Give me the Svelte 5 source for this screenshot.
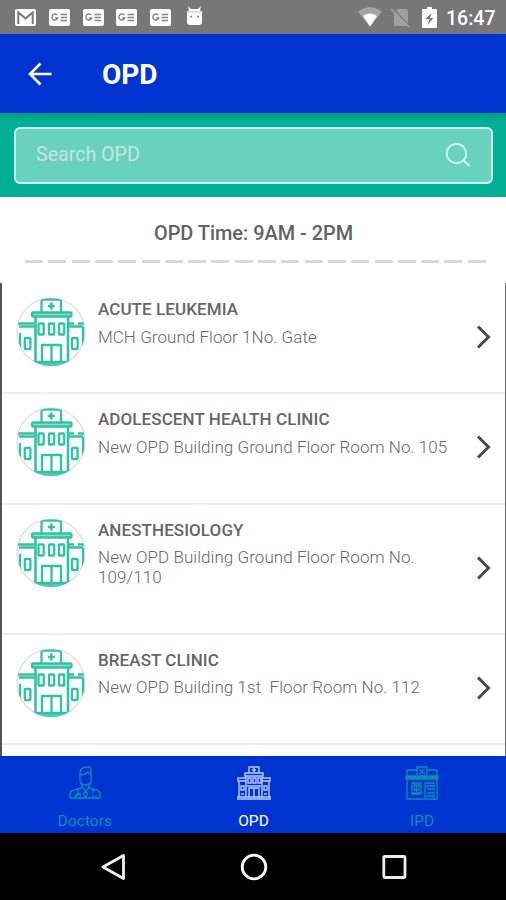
<script>
  const clinics = [
    { name: 'ACUTE LEUKEMIA', place: 'MCH Ground Floor 1No. Gate' },
    { name: 'ADOLESCENT HEALTH CLINIC', place: 'New OPD Building Ground Floor Room No. 105' },
    { name: 'ANESTHESIOLOGY', place: 'New OPD Building Ground Floor Room No. 109/110', tall: true },
    { name: 'BREAST CLINIC', place: 'New OPD Building 1st  Floor Room No. 112' },
    { name: '', place: '' }
  ];
</script>

{#snippet news()}
  <svg class="news" width="21" height="17" viewBox="0 0 21 17">
    <rect x="0" y="0" width="21" height="17" rx="2" fill="#fff" />
    <path d="M8.3 6.2A3 3 0 1 0 8.7 9H6.2M11.5 5.5h6.5M11.5 8.5h6.5M11.5 11.5h6.5" fill="none" stroke="#858585" stroke-width="1.4" />
  </svg>
{/snippet}

{#snippet hospital()}
  <svg class="building" width="70" height="70" viewBox="0 0 70 70">
    <defs><clipPath id="disc"><circle cx="35" cy="35" r="34" /></clipPath></defs>
    <circle cx="35" cy="35" r="34" fill="#fff" stroke="#dcdcdc" stroke-width="1.2" />
    <g clip-path="url(#disc)" fill="none" stroke="#30c2a7" stroke-width="2.3" stroke-linejoin="round">
      <path d="M25.500 15V4.500q0-2 2-2h15.500q2 0 2 2V15" />
      <path d="M35.300 5.500v7M31.800 9h7" stroke-width="2.600" />
      <rect x="16" y="15.500" width="39.500" height="4" rx="1" fill="#8bdccd" />
      <path d="M19.500 20v46M52 20v46" stroke-width="2.600" />
      <path d="M0 26.500h18.500M3 29.500h15.500M53 26.500h5M62 26.500h8M53 29.500h14M4 36v28M67 30v34" />
      <rect x="22.500" y="26.500" width="5.200" height="11" rx=".7" />
      <rect x="33" y="26.500" width="5.200" height="11" rx=".7" />
      <rect x="43" y="26.500" width="5.200" height="11" rx=".7" />
      <rect x="8.800" y="41" width="5.600" height="11" rx=".7" />
      <rect x="56" y="41" width="5.600" height="11" rx=".7" />
      <path d="M26 65V48h19v17M35.500 48v17" />
      <rect x="0" y="65" width="70" height="5" fill="#4bccb3" />
    </g>
  </svg>
{/snippet}

<div class="screen">
  <div class="status">
    <svg class="mail" width="21" height="17" viewBox="0 0 21 17"><rect width="21" height="17" rx="2" fill="#fff" /><path d="M3.3 15V3.5l7.2 6 7.2-6V15" fill="none" stroke="#777" stroke-width="2" /></svg>
    {@render news()}{@render news()}{@render news()}{@render news()}
    <svg class="android" width="17" height="20" viewBox="0 0 17 20"><path d="M1 6l2-2-1-4 3 3h7l3-3-1 4 2 2v10q0 3-3 3H4q-3 0-3-3z" fill="#fff" /><path d="M0 6h17" stroke="#bbb" /><circle cx="5" cy="10.5" r="1" fill="#777" /><circle cx="12" cy="10.5" r="1" fill="#777" /></svg>
    <div class="signals">
      <svg width="24" height="20" viewBox="0 0 24 20"><path d="M0 4.5Q12-4 24 4.5L12 20z" fill="#a5a5a5" /><path d="M5 9q7-5 14 0l-7 10.5z" fill="#fff" /></svg>
      <svg class="sim" width="19" height="20" viewBox="0 0 19 20"><path d="M3 5l4-4h8q2 0 2 2v15H3z" fill="#a0a0a0" /><path d="M1 0l18 19" stroke="#777" stroke-width="2" /><path d="M0 1l18 18" stroke="#a7a7a7" stroke-width="1.5" /></svg>
      <svg class="battery" width="15" height="21" viewBox="0 0 15 21"><path d="M0 3q0-1 1-1h4V0h5v2h4q1 0 1 1v17q0 1-1 1H1q-1 0-1-1z" fill="#fff" /><path d="M9.5 6l-6 6h4l-2 6 6-7H8z" fill="#777" /></svg>
      <span class="clock">16:47</span>
    </div>
  </div>

  <header>
    <svg width="24" height="24" viewBox="0 0 24 24"><path d="M23.500 12H2.500M12.500 1.500L2 12l10.500 10.500" fill="none" stroke="#fff" stroke-width="2.600" /></svg>
    <h1>OPD</h1>
  </header>

  <div class="search">
    <div class="field">
      <span>Search OPD</span>
      <svg width="26" height="26" viewBox="0 0 26 26"><circle cx="11.500" cy="11.500" r="9.700" fill="none" stroke="#d3fbf1" stroke-width="1.800" /><path d="M18 18l6.500 6" stroke="#d3fbf1" stroke-width="1.800" /></svg>
    </div>
  </div>

  <div class="hours">
    <strong>OPD Time: 9AM - 2PM</strong>
    <div class="dashes"></div>
  </div>

  <main>
    {#each clinics as c}
      <div class="row" class:tall={c.tall}>
        {#if c.name}
          {@render hospital()}
          <div class="text">
            <h2>{c.name}</h2>
            <p>{c.place}</p>
          </div>
          <svg class="chevron" width="16" height="26" viewBox="0 0 16 26"><path d="M2 2.500L12.500 13 2 23.500" fill="none" stroke="#4b4b4b" stroke-width="3" /></svg>
        {/if}
      </div>
    {/each}
  </main>

  <nav>
    <div class="tab">
      <svg width="34" height="34" viewBox="0 0 34 34" fill="none" stroke="#078eb9" stroke-width="1.400">
        <path d="M12 15V6q1-5 8-5 3 0 3 4v10q-1 4-5.500 4T12 15zM12 9q5 0 8-3l3 3M14 18v4l-8 2q-4 1-4 5v3h30v-3q0-4-4-5l-7-2v-4" />
        <path d="M14 21l3.500 4 3.500-4M17.500 25l-2 3 2 4 2-4zM10 23v5l-2 3M25 23v4M8 28h4v3M25 29v2M7 29v3M28 29v3" />
      </svg>
      <span>Doctors</span>
    </div>
    <div class="tab active">
      <svg width="34" height="34" viewBox="0 0 34 34" fill="none" stroke="#b8c9ff" stroke-width="1.400">
        <path d="M12 7V1h10v6M17 2v4M15 4h4M8 7h18v3H8zM9 10v22M25 10v22M1 12h8v3H1zM25 12h8v3h-8zM2 15v17M32 15v17M0 33h34M0 31h34" />
        <path d="M11 12h3v5h-3zM16 12h3v5h-3zM21 12h3v5h-3zM4 20h3v4H4zM27 20h3v4h-3zM12 32V22h10v10M17 22v10M10 20h14M4 28h3M27 28h3" />
      </svg>
      <span>OPD</span>
    </div>
    <div class="tab">
      <svg width="34" height="34" viewBox="0 0 34 34" fill="none" stroke="#078eb9" stroke-width="1.300">
        <path d="M2 10V4h10M22 4h10v6M12 10V1h10v9zM14 3l6 5M20 3l-6 5M1 10h32v3H1zM2 13v20h30V13M1 11.500h32" />
        <path d="M7 17h9v10H7zM9 19h5v5H9zM11.500 17v10M6 28h11M20 33V17h9v16M20 20h9M22 23h6M22 27h6M20 30h9" />
      </svg>
      <span>IPD</span>
    </div>
  </nav>

  <footer>
    <svg width="28" height="30" viewBox="0 0 28 30"><path d="M23.500 3.500v23L3 15z" fill="none" stroke="#f1f1f1" stroke-width="2.800" stroke-linejoin="round" /></svg>
    <svg width="28" height="30" viewBox="0 0 28 30"><circle cx="14" cy="15" r="11.800" fill="none" stroke="#fff" stroke-width="2.800" /></svg>
    <svg width="28" height="30" viewBox="0 0 28 30"><rect x="3.800" y="4.500" width="21.200" height="21" rx="1" fill="none" stroke="#eee" stroke-width="2.800" /></svg>
  </footer>
</div>

<style>
  :global(body) { margin: 0; }
  * { box-sizing: border-box; }
  svg { display: block; flex: none; }
  .screen { width: 506px; height: 900px; display: flex; flex-direction: column; overflow: hidden; background: #fff; font-family: Roboto, sans-serif; }
  .status { height: 34px; flex: none; background: #777; display: flex; align-items: flex-start; padding: 0 11px 0 15px; }
  .mail, .news { margin: 9px 12.800px 0 0; }
  .android { margin: 6px 0 0 2px; }
  .signals { margin-left: auto; display: flex; align-items: flex-start; padding-top: 7px; }
  .sim { margin: 1px 0 0 9px; }
  .battery { margin-left: 12px; }
  .clock { color: #fff; font-size: 19.500px; font-weight: 500; line-height: 23px; margin-left: 9px; width: 49px; white-space: nowrap; }
  header { height: 79px; flex: none; background: #0034d0; display: flex; align-items: center; padding-left: 28px; }
  h1 { margin: 3px 0 0 50px; color: #fff; font-size: 28px; line-height: 34px; font-weight: 700; }
  .search { height: 84px; flex: none; background: linear-gradient(#009c83, #00af94 8px); padding: 14px 13px 0 14px; }
  .field { height: 57px; border: 2px solid #c8fff2; border-radius: 6px; background: #69d2bf; display: flex; align-items: center; justify-content: space-between; padding: 0 20px 2px; color: #c8e5e0; font-size: 19.600px; }
  .hours { height: 86px; flex: none; display: flex; flex-direction: column; align-items: center; padding-top: 25px; }
  .hours strong { font-size: 19.900px; line-height: 24px; font-weight: 500; color: #626262; margin-left: 1px; }
  .dashes { width: 461px; height: 3px; margin: 14px 0 0 4px; background: repeating-linear-gradient(90deg, #d9d9d9 0 18px, transparent 18px 23.300px); }
  main { height: 473px; flex: none; overflow: hidden; border-left: 2px solid #555; border-right: 1px solid #666; padding-top: 1px; }
  .row { height: 110.300px; border-bottom: 2px solid #eee; display: flex; padding-left: 14px; background: #fff; }
  .row.tall { height: 130px; }
  .building { margin-top: 13px; }
  .text { margin: 15.200px 0 0 12px; width: 354px; }
  h2 { margin: 0; color: #666; font-size: 17px; line-height: 20px; font-weight: 500; letter-spacing: .08px; white-space: nowrap; }
  p { margin: 7.500px 0 0; color: #686868; font-size: 17px; line-height: 20px; font-weight: 300; letter-spacing: .05px; white-space: pre-wrap; }
  .chevron { align-self: center; margin: 0 0 2px 23.500px; }
  nav { height: 77px; flex: none; background: #0034d0; display: flex; justify-content: space-between; }
  .tab { width: 168.660px; display: flex; flex-direction: column; align-items: center; padding: 10px 0 0 1px; color: #0792b8; font-size: 15.500px; line-height: 20px; }
  .tab span { margin-top: 11px; }
  .tab.active { color: #fff; }
  footer { height: 67px; flex: none; background: #000; display: flex; justify-content: space-between; padding: 19px 98px 0 100px; }
</style>
